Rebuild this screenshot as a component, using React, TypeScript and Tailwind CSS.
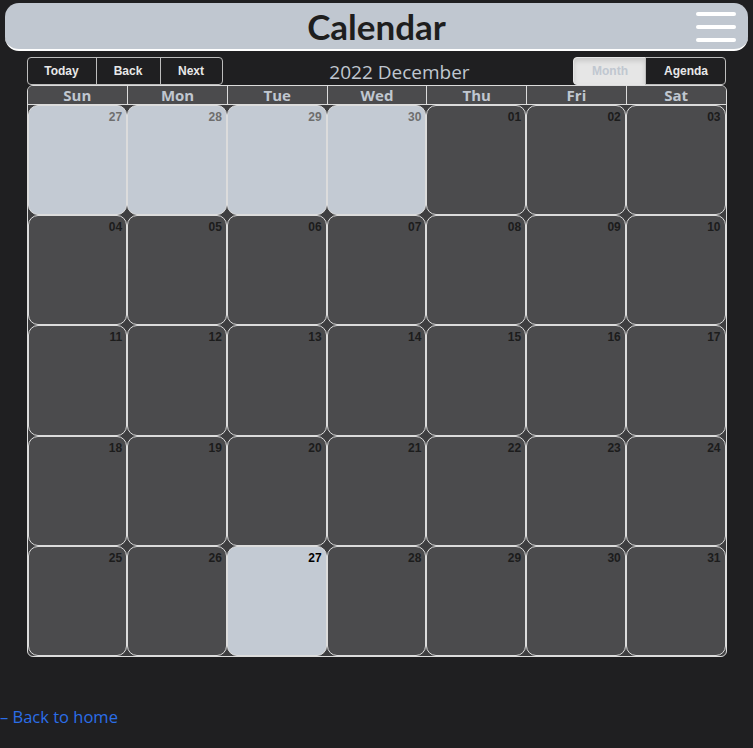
import { Menu } from "lucide-react";

type Day = { n: string; off?: boolean; today?: boolean };

const weekdays = ["Sun", "Mon", "Tue", "Wed", "Thu", "Fri", "Sat"];

const buildDays = (): Day[] => {
  const days: Day[] = [27, 28, 29, 30].map((n) => ({ n: String(n), off: true }));
  for (let i = 1; i <= 31; i++) {
    days.push({ n: String(i).padStart(2, "0"), today: i === 27 });
  }
  return days;
};

const DayCell = ({ day }: { day: Day }) => {
  const light = day.off || day.today;
  return (
    <div
      className={`rounded-[10px] border border-[#dcdcdc] px-[4px] pt-[2px] text-right text-[12px] font-bold ${
        light ? "bg-[#c3cad3]" : "bg-[#4b4b4d]"
      } ${day.off ? "text-[#6e6e6e]" : day.today ? "text-black" : "text-[#1c1c1c]"}`}
      style={{ fontFamily: "'Liberation Sans', Arial, sans-serif" }}
    >
      {day.n}
    </div>
  );
};

const ToolButton = ({ label, className = "" }: { label: string; className?: string }) => (
  <button
    type="button"
    className={`h-[28px] border border-[#bdbdbd] text-[12px] font-bold text-[#e8e8e8] ${className}`}
    style={{ fontFamily: "'Liberation Sans', Arial, sans-serif" }}
  >
    {label}
  </button>
);

export default function App() {
  const days = buildDays();

  return (
    <div className="min-h-screen bg-[#1f1f21] pt-[3px]" style={{ fontFamily: "'Open Sans', sans-serif" }}>
      <header className="relative mx-[5px] flex h-[48px] items-center justify-center rounded-[14px] border-b-2 border-white bg-[#c0c7d0]">
        <h1 className="text-[35px] font-bold leading-none text-[#1e1e1e]" style={{ fontFamily: "Lato, sans-serif" }}>
          Calendar
        </h1>
        <div className="absolute right-[12px] top-[9px] flex flex-col gap-[9px]">
          <span className="block h-[4px] w-[40px] rounded-full bg-white" />
          <span className="block h-[4px] w-[40px] rounded-full bg-white" />
          <span className="block h-[4px] w-[40px] rounded-full bg-white" />
        </div>
      </header>

      <main className="mx-auto mt-[5px] w-[700px]">
        <div className="flex h-[29px] items-center justify-between">
          <div className="flex">
            <ToolButton label="Today" className="w-[70px] rounded-l-[4px]" />
            <ToolButton label="Back" className="-ml-px w-[65px]" />
            <ToolButton label="Next" className="-ml-px w-[63px] rounded-r-[4px]" />
          </div>
          <span className="ml-[3px] pt-[4px] text-[19px] leading-none text-[#c0c7d0]">2022 December</span>
          <div className="flex">
            <button
              type="button"
              className="h-[28px] w-[73px] rounded-l-[4px] border border-[#e6e6e6] bg-[#e6e6e6] text-[12px] font-bold text-[#c0c7d0] shadow-[inset_0_3px_5px_rgba(0,0,0,0.13)]"
              style={{ fontFamily: "'Liberation Sans', Arial, sans-serif" }}
            >
              Month
            </button>
            <ToolButton label="Agenda" className="-ml-px w-[81px] rounded-r-[4px]" />
          </div>
        </div>

        <div className="overflow-hidden rounded-[6px] border border-[#dcdcdc] bg-[#3e3e40]">
          <div className="grid grid-cols-7 bg-[#4b4b4d]">
            {weekdays.map((d, i) => (
              <div
                key={d}
                className={`h-[18px] text-center text-[15px] font-bold leading-[18px] text-[#c0c7d0] ${
                  i > 0 ? "border-l border-[#dcdcdc]" : ""
                }`}
              >
                {d}
              </div>
            ))}
          </div>
          <div className="grid h-[552px] grid-cols-7 grid-rows-5 border-t border-[#dcdcdc]">
            {days.map((day, i) => (
              <DayCell key={i} day={day} />
            ))}
          </div>
        </div>
      </main>

      <a href="#" className="mt-[52px] block text-[16.5px] leading-none text-[#2b6ee8]">
        – Back to home
      </a>
    </div>
  );
}
